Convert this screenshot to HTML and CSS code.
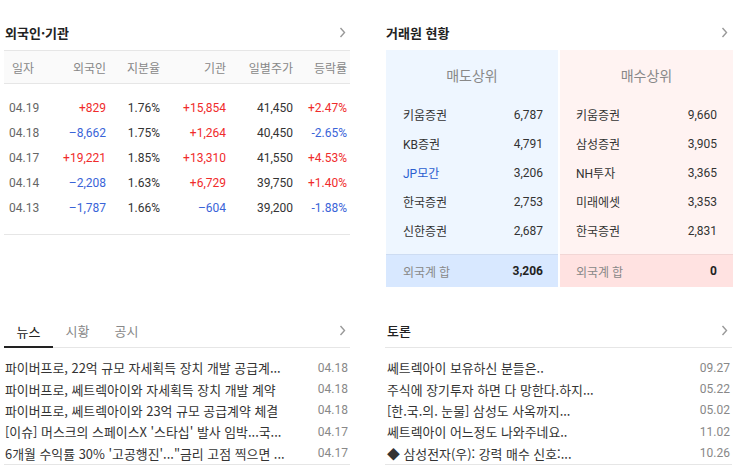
FILE: index.html
```html
<!DOCTYPE html>
<html lang="ko">
<head>
<meta charset="utf-8">
<link rel="stylesheet" href="styles.css">
</head>
<body>
<div class="page">
  <section class="panel">
    <div class="head">
      <h2 class="title">외국인·기관</h2>
      <svg class="chev" width="7" height="11" viewBox="0 0 7 11"><polyline points="1.5,1 5.5,5.5 1.5,10" fill="none" stroke="#999" stroke-width="1.4"/></svg>
    </div>
    <div class="tbl">
      <div class="trow thead">
        <span class="c-date">일자</span><span>외국인</span><span>지분율</span><span>기관</span><span>일별주가</span><span>등락률</span>
      </div>
      <div class="tbody">
        <div class="trow"><span class="c-date">04.19</span><span class="up">+829</span><span>1.76%</span><span class="up">+15,854</span><span>41,450</span><span class="up">+2.47%</span></div>
        <div class="trow"><span class="c-date">04.18</span><span class="dn">–8,662</span><span>1.75%</span><span class="up">+1,264</span><span>40,450</span><span class="dn">-2.65%</span></div>
        <div class="trow"><span class="c-date">04.17</span><span class="up">+19,221</span><span>1.85%</span><span class="up">+13,310</span><span>41,550</span><span class="up">+4.53%</span></div>
        <div class="trow"><span class="c-date">04.14</span><span class="dn">–2,208</span><span>1.63%</span><span class="up">+6,729</span><span>39,750</span><span class="up">+1.40%</span></div>
        <div class="trow"><span class="c-date">04.13</span><span class="dn">–1,787</span><span>1.66%</span><span class="dn">–604</span><span>39,200</span><span class="dn">-1.88%</span></div>
      </div>
    </div>
  </section>

  <section class="panel">
    <div class="head">
      <h2 class="title">거래원 현황</h2>
      <svg class="chev" width="7" height="11" viewBox="0 0 7 11"><polyline points="1.5,1 5.5,5.5 1.5,10" fill="none" stroke="#999" stroke-width="1.4"/></svg>
    </div>
    <div class="brokers">
      <div class="bcol sell">
        <div class="bhead">매도상위</div>
        <ul class="blist">
          <li><span>키움증권</span><span>6,787</span></li>
          <li><span>KB증권</span><span>4,791</span></li>
          <li><span class="foreign">JP모간</span><span>3,206</span></li>
          <li><span>한국증권</span><span>2,753</span></li>
          <li><span>신한증권</span><span>2,687</span></li>
        </ul>
        <div class="bfoot"><span>외국계 합</span><strong>3,206</strong></div>
      </div>
      <div class="bcol buy">
        <div class="bhead">매수상위</div>
        <ul class="blist">
          <li><span>키움증권</span><span>9,660</span></li>
          <li><span>삼성증권</span><span>3,905</span></li>
          <li><span>NH투자</span><span>3,365</span></li>
          <li><span>미래에셋</span><span>3,353</span></li>
          <li><span>한국증권</span><span>2,831</span></li>
        </ul>
        <div class="bfoot"><span>외국계 합</span><strong>0</strong></div>
      </div>
    </div>
  </section>

  <section class="panel">
    <div class="head tabs-head">
      <div class="tabs">
        <span class="tab active">뉴스</span><span class="tab">시황</span><span class="tab">공시</span>
      </div>
      <svg class="chev" width="7" height="11" viewBox="0 0 7 11"><polyline points="1.5,1 5.5,5.5 1.5,10" fill="none" stroke="#999" stroke-width="1.4"/></svg>
    </div>
    <ul class="list">
      <li><span class="txt">파이버프로, 22억 규모 자세획득 장치 개발 공급계...</span><span class="date">04.18</span></li>
      <li><span class="txt">파이버프로, 쎄트렉아이와 자세획득 장치 개발 계약</span><span class="date">04.18</span></li>
      <li><span class="txt">파이버프로, 쎄트렉아이와 23억 규모 공급계약 체결</span><span class="date">04.18</span></li>
      <li><span class="txt">[이슈] 머스크의 스페이스X '스타십' 발사 임박...국...</span><span class="date">04.17</span></li>
      <li><span class="txt">6개월 수익률 30% '고공행진'..."금리 고점 찍으면 ...</span><span class="date">04.17</span></li>
    </ul>
  </section>

  <section class="panel">
    <div class="head line-head">
      <h2 class="title">토론</h2>
      <svg class="chev" width="7" height="11" viewBox="0 0 7 11"><polyline points="1.5,1 5.5,5.5 1.5,10" fill="none" stroke="#999" stroke-width="1.4"/></svg>
    </div>
    <ul class="list talk">
      <li><span class="txt">쎄트렉아이 보유하신 분들은..</span><span class="date">09.27</span></li>
      <li><span class="txt">주식에 장기투자 하면 다 망한다.하지...</span><span class="date">05.22</span></li>
      <li><span class="txt">[한.국.의. 눈물] 삼성도 사옥까지...</span><span class="date">05.02</span></li>
      <li><span class="txt">쎄트렉아이 어느정도 나와주네요..</span><span class="date">11.02</span></li>
      <li><span class="txt">◆ 삼성전자(우): 강력 매수 신호:...</span><span class="date">10.26</span></li>
    </ul>
  </section>
</div>
</body>
</html>
```

FILE: styles.css
```css
* { box-sizing: border-box; }
html, body { margin: 0; padding: 0; background: #fff; }
body {
  font-family: Roboto, "Noto Sans CJK KR", sans-serif;
  color: #333;
  font-size: 12px;
}
ul { list-style: none; margin: 0; padding: 0; }
h2 { margin: 0; }

.page {
  display: grid;
  grid-template-columns: 346px 347px;
  column-gap: 35px;
  row-gap: 27px;
  align-items: start;
  padding: 15px 0 0 4px;
}

.head {
  height: 35px;
  display: flex;
  align-items: center;
  justify-content: space-between;
  padding-right: 4px;
}
.title {
  font-family: "Noto Sans CJK KR", sans-serif;
  font-size: 13px;
  font-weight: 700;
  color: #222;
  padding-left: 1px;
}
.chev { display: block; }

/* foreign/institution table */
.tbl { border-bottom: 1px solid #e6e6e6; padding-bottom: 14px; }
.trow {
  display: grid;
  grid-template-columns: 56px 49px 54px 66px 67px 54px;
  height: 25px;
  align-items: center;
  font-size: 12px;
}
.trow span { text-align: right; padding-right: 3px; white-space: nowrap; }
.trow span.c-date { text-align: left; padding-left: 5px; color: #666; }
.thead {
  height: 34px;
  background: #fafafa;
  border-top: 1px solid #e6e6e6;
  border-bottom: 1px solid #e6e6e6;
  color: #888;
  font-family: "Noto Sans CJK KR", sans-serif;
}
.thead span.c-date { padding-left: 8px; color: #888; }
.tbody { padding-top: 11px; }
.up { color: #f02b2b; }
.dn { color: #3a64d8; }

/* brokers */
.brokers {
  display: grid;
  grid-template-columns: 172px 173px;
  column-gap: 2px;
  margin-left: 1px;
}
.bcol { display: flex; flex-direction: column; }
.sell { background: #eef6ff; }
.buy { background: #fff3f2; }
.bhead {
  height: 50px;
  display: flex;
  align-items: center;
  justify-content: center;
  font-family: "Noto Sans CJK KR", sans-serif;
  font-size: 14px;
  color: #888;
}
.blist { padding-bottom: 9px; }
.blist li {
  height: 29px;
  display: flex;
  align-items: center;
  justify-content: space-between;
  font-size: 12px;
  color: #333;
}
.sell .blist li, .sell .bfoot { padding: 0 15px 0 17px; }
.buy .blist li, .buy .bfoot { padding: 0 16px 0 16px; }
.blist .foreign { color: #2b5fd0; }
.bfoot {
  height: 33px;
  display: flex;
  align-items: center;
  justify-content: space-between;
  border-top: 1px solid rgba(0, 0, 0, 0.05);
  color: #888;
  font-size: 12px;
}
.sell .bfoot { background: #d8e8ff; }
.buy .bfoot { background: #ffe2e1; }
.bfoot strong { color: #222; font-weight: 700; }

/* tabs */
.tabs-head, .line-head {
  height: 34px;
  border-bottom: 1px solid #e6e6e6;
  margin-top: 0;
}
.tabs { display: flex; height: 100%; }
.tab {
  width: 49px;
  display: flex;
  align-items: center;
  justify-content: center;
  font-family: "Noto Sans CJK KR", sans-serif;
  font-size: 13px;
  color: #888;
}
.tab.active {
  color: #222;
  border-bottom: 2px solid #222;
  padding-top: 2px;
  margin-bottom: -1px;
}
.line-head .title { font-weight: 500; padding-left: 2px; }

.list {
  padding-top: 9px;
  border-bottom: 1px solid #e6e6e6;
}
.list li {
  height: 21.4px;
  display: flex;
  align-items: center;
  justify-content: space-between;
  font-size: 12px;
  color: #333;
  padding: 0 2px 0 1px;
}
.list.talk li { padding: 0 2px 0 2px; }
.list .txt { font-family: "Noto Sans CJK KR", sans-serif; font-size: 12.9px; white-space: nowrap; }
.list .date { color: #888; }
```
